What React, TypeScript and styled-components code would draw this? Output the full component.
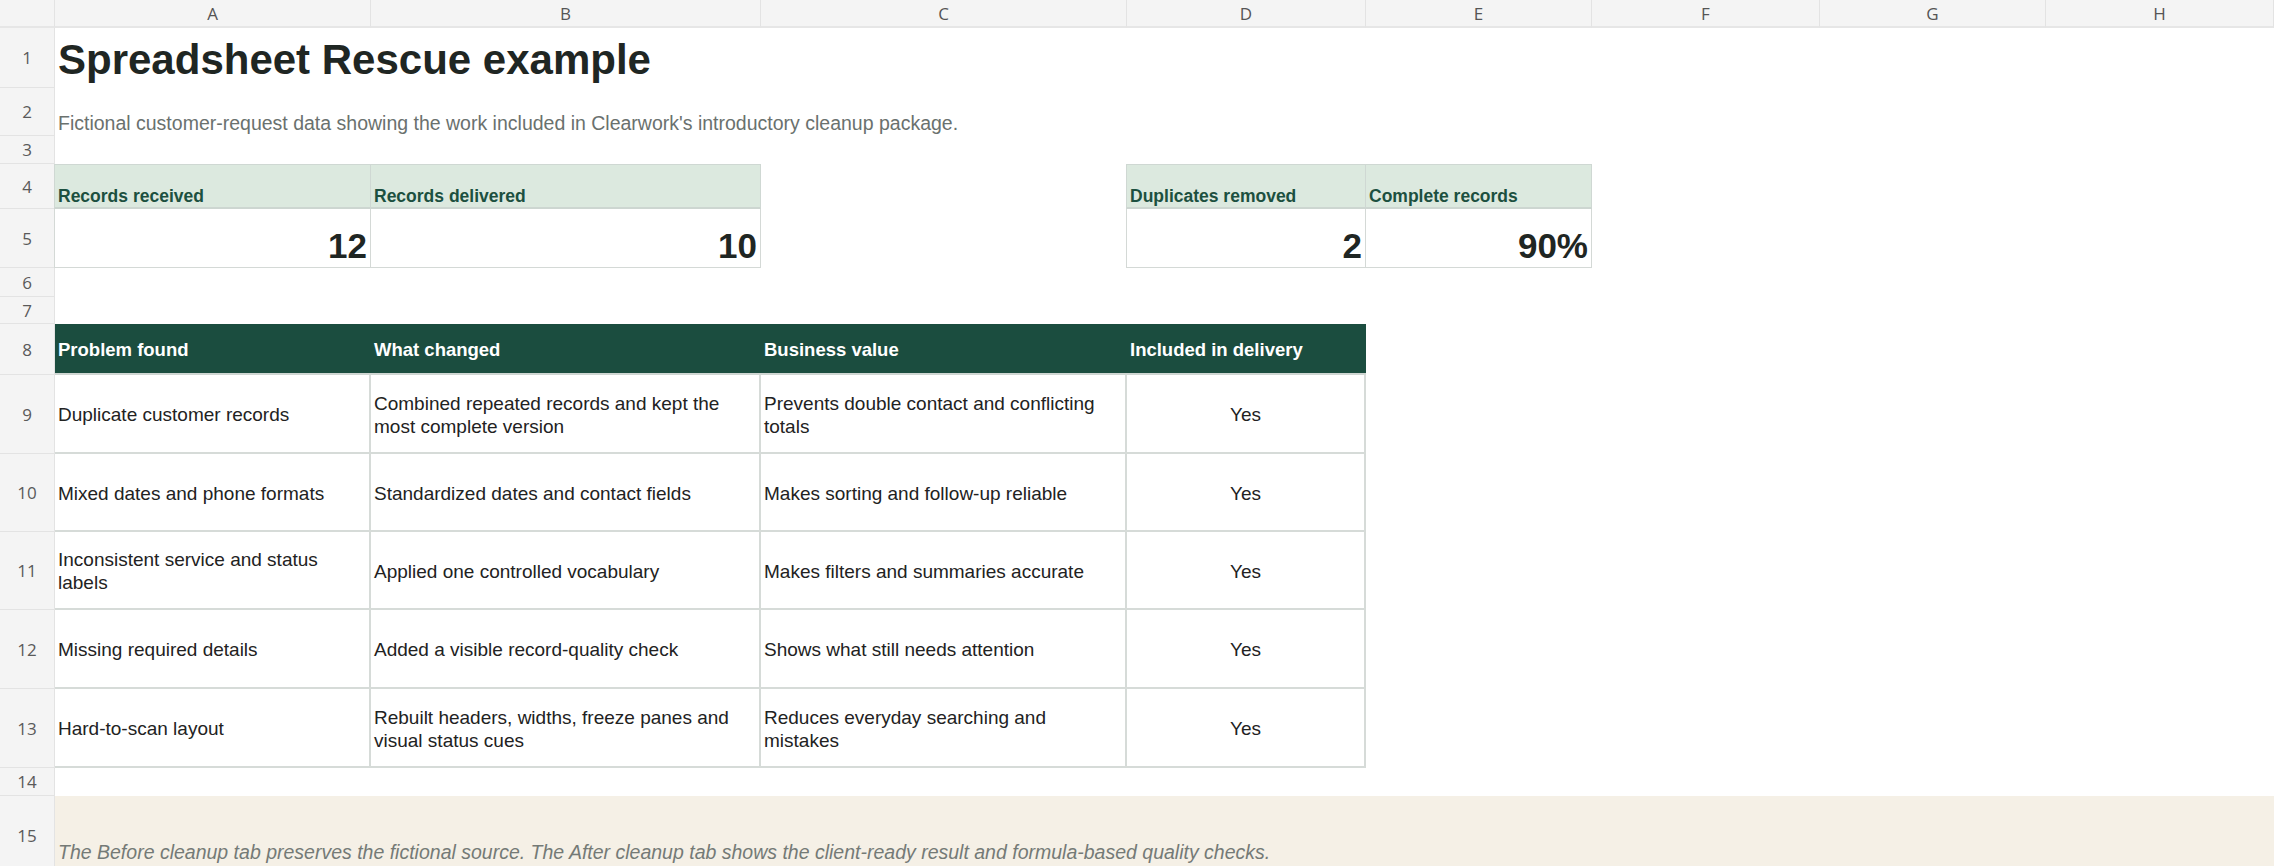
import React from 'react';
import styled, { createGlobalStyle } from 'styled-components';

const Global = createGlobalStyle`
  html, body { margin: 0; padding: 0; background: #fff; }
  body { font-family: "Liberation Sans", Arial, sans-serif; color: #1d2421; }
`;

const COLS = ['A', 'B', 'C', 'D', 'E', 'F', 'G', 'H'];
const ROW_HEIGHTS = [60, 48, 28, 45, 59, 29, 27, 51, 79, 78, 78, 79, 79, 28, 80];

const Sheet = styled.div`
  display: grid;
  grid-template-columns: 55px 316px 390px 366px 239px 226px 228px 226px 228px;
  grid-template-rows: 28px ${ROW_HEIGHTS.map((h) => `${h}px`).join(' ')};
  width: 2274px;
  height: 866px;
  overflow: hidden;
`;

const ColHead = styled.div`
  background: #f4f4f4;
  border-right: 1px solid #e3e3e3;
  border-bottom: 2px solid #e6e6e6;
  display: flex;
  align-items: center;
  justify-content: center;
  font-family: "Open Sans", sans-serif;
  font-size: 17px;
  color: #555;
`;

const RowHead = styled.div`
  background: #f4f4f4;
  border-bottom: 1px solid #e3e3e3;
  border-right: 1px solid #e3e3e3;
  display: flex;
  align-items: center;
  justify-content: center;
  font-family: "Open Sans", sans-serif;
  font-size: 17px;
  color: #5a5a5a;
`;

const Span = styled.div<{ $from: number; $to: number; $bg?: string }>`
  grid-column: ${(p) => p.$from} / ${(p) => p.$to};
  background: ${(p) => p.$bg || 'transparent'};
  display: flex;
  align-items: flex-end;
  padding: 0 3px 2px;
  min-width: 0;
  white-space: nowrap;
`;

const Title = styled(Span)`
  font-size: 42px;
  font-weight: 700;
  color: #1f2623;
  padding-bottom: 4px;
`;

const Subtitle = styled(Span)`
  font-size: 19.5px;
  color: #6a716e;
  padding-bottom: 1px;
`;

const Footer = styled(Span)`
  font-size: 19.5px;
  font-style: italic;
  color: #747a76;
  padding-bottom: 12px;
`;

const KpiLabel = styled.div`
  background: #dce9df;
  border: 1px solid #cfd8d3;
  border-bottom: 2px solid #cdd6d1;
  margin-left: -1px;
  display: flex;
  align-items: flex-end;
  padding: 0 3px 0;
  font-size: 17.5px;
  font-weight: 700;
  color: #1c5040;
`;

const KpiValue = styled.div`
  border: 1px solid #d4d9d6;
  border-top: none;
  margin-left: -1px;
  display: flex;
  align-items: flex-end;
  justify-content: flex-end;
  padding: 0 3px 1px;
  font-size: 35px;
  font-weight: 700;
  color: #1f2623;
`;

const Head = styled.div`
  background: #1b4d3f;
  border-bottom: 2px solid #cfd6d2;
  display: flex;
  align-items: center;
  padding: 3px 3px 0;
  font-size: 18.5px;
  font-weight: 700;
  color: #fff;
`;

const Cell = styled.div<{ $center?: boolean }>`
  border-right: 2px solid #d6dbd8;
  border-bottom: 2px solid #d6dbd8;
  display: flex;
  align-items: center;
  justify-content: ${(p) => (p.$center ? 'center' : 'flex-start')};
  padding: 2px 3px 0;
  font-size: 19px;
  line-height: 23px;
  color: #222;
`;

const Empty = styled.div``;

const kpis: ([string, string] | null)[] = [
  ['Records received', '12'],
  ['Records delivered', '10'],
  null,
  ['Duplicates removed', '2'],
  ['Complete records', '90%'],
];

const rows = [
  ['Duplicate customer records', 'Combined repeated records and kept the most complete version', 'Prevents double contact and conflicting totals'],
  ['Mixed dates and phone formats', 'Standardized dates and contact fields', 'Makes sorting and follow-up reliable'],
  ['Inconsistent service and status labels', 'Applied one controlled vocabulary', 'Makes filters and summaries accurate'],
  ['Missing required details', 'Added a visible record-quality check', 'Shows what still needs attention'],
  ['Hard-to-scan layout', 'Rebuilt headers, widths, freeze panes and visual status cues', 'Reduces everyday searching and mistakes'],
];

const fill = (n: number, key: string) =>
  Array.from({ length: n }, (_, i) => <Empty key={`${key}-${i}`} />);

export default function App() {
  return (
    <>
      <Global />
      <Sheet>
        <ColHead />
        {COLS.map((c) => <ColHead key={c}>{c}</ColHead>)}

        <RowHead>1</RowHead>
        <Title $from={2} $to={10}>Spreadsheet Rescue example</Title>

        <RowHead>2</RowHead>
        <Subtitle $from={2} $to={10}>
          Fictional customer-request data showing the work included in Clearwork's introductory cleanup package.
        </Subtitle>

        <RowHead>3</RowHead>
        {fill(8, 'r3')}

        <RowHead>4</RowHead>
        {kpis.map((k, i) => (k ? <KpiLabel key={i}>{k[0]}</KpiLabel> : <Empty key={i} />))}
        {fill(3, 'r4')}

        <RowHead>5</RowHead>
        {kpis.map((k, i) => (k ? <KpiValue key={i}>{k[1]}</KpiValue> : <Empty key={i} />))}
        {fill(3, 'r5')}

        <RowHead>6</RowHead>
        {fill(8, 'r6')}
        <RowHead>7</RowHead>
        {fill(8, 'r7')}

        <RowHead>8</RowHead>
        {['Problem found', 'What changed', 'Business value', 'Included in delivery'].map((h) => (
          <Head key={h}>{h}</Head>
        ))}
        {fill(4, 'r8')}

        {rows.map((r, i) => (
          <React.Fragment key={i}>
            <RowHead>{9 + i}</RowHead>
            {r.map((t, j) => <Cell key={j}>{t}</Cell>)}
            <Cell $center>Yes</Cell>
            {fill(4, `r${9 + i}`)}
          </React.Fragment>
        ))}

        <RowHead>14</RowHead>
        {fill(8, 'r14')}

        <RowHead>15</RowHead>
        <Footer $from={2} $to={10} $bg="#f5f0e6">
          The Before cleanup tab preserves the fictional source. The After cleanup tab shows the client-ready result and formula-based quality checks.
        </Footer>
      </Sheet>
    </>
  );
}
